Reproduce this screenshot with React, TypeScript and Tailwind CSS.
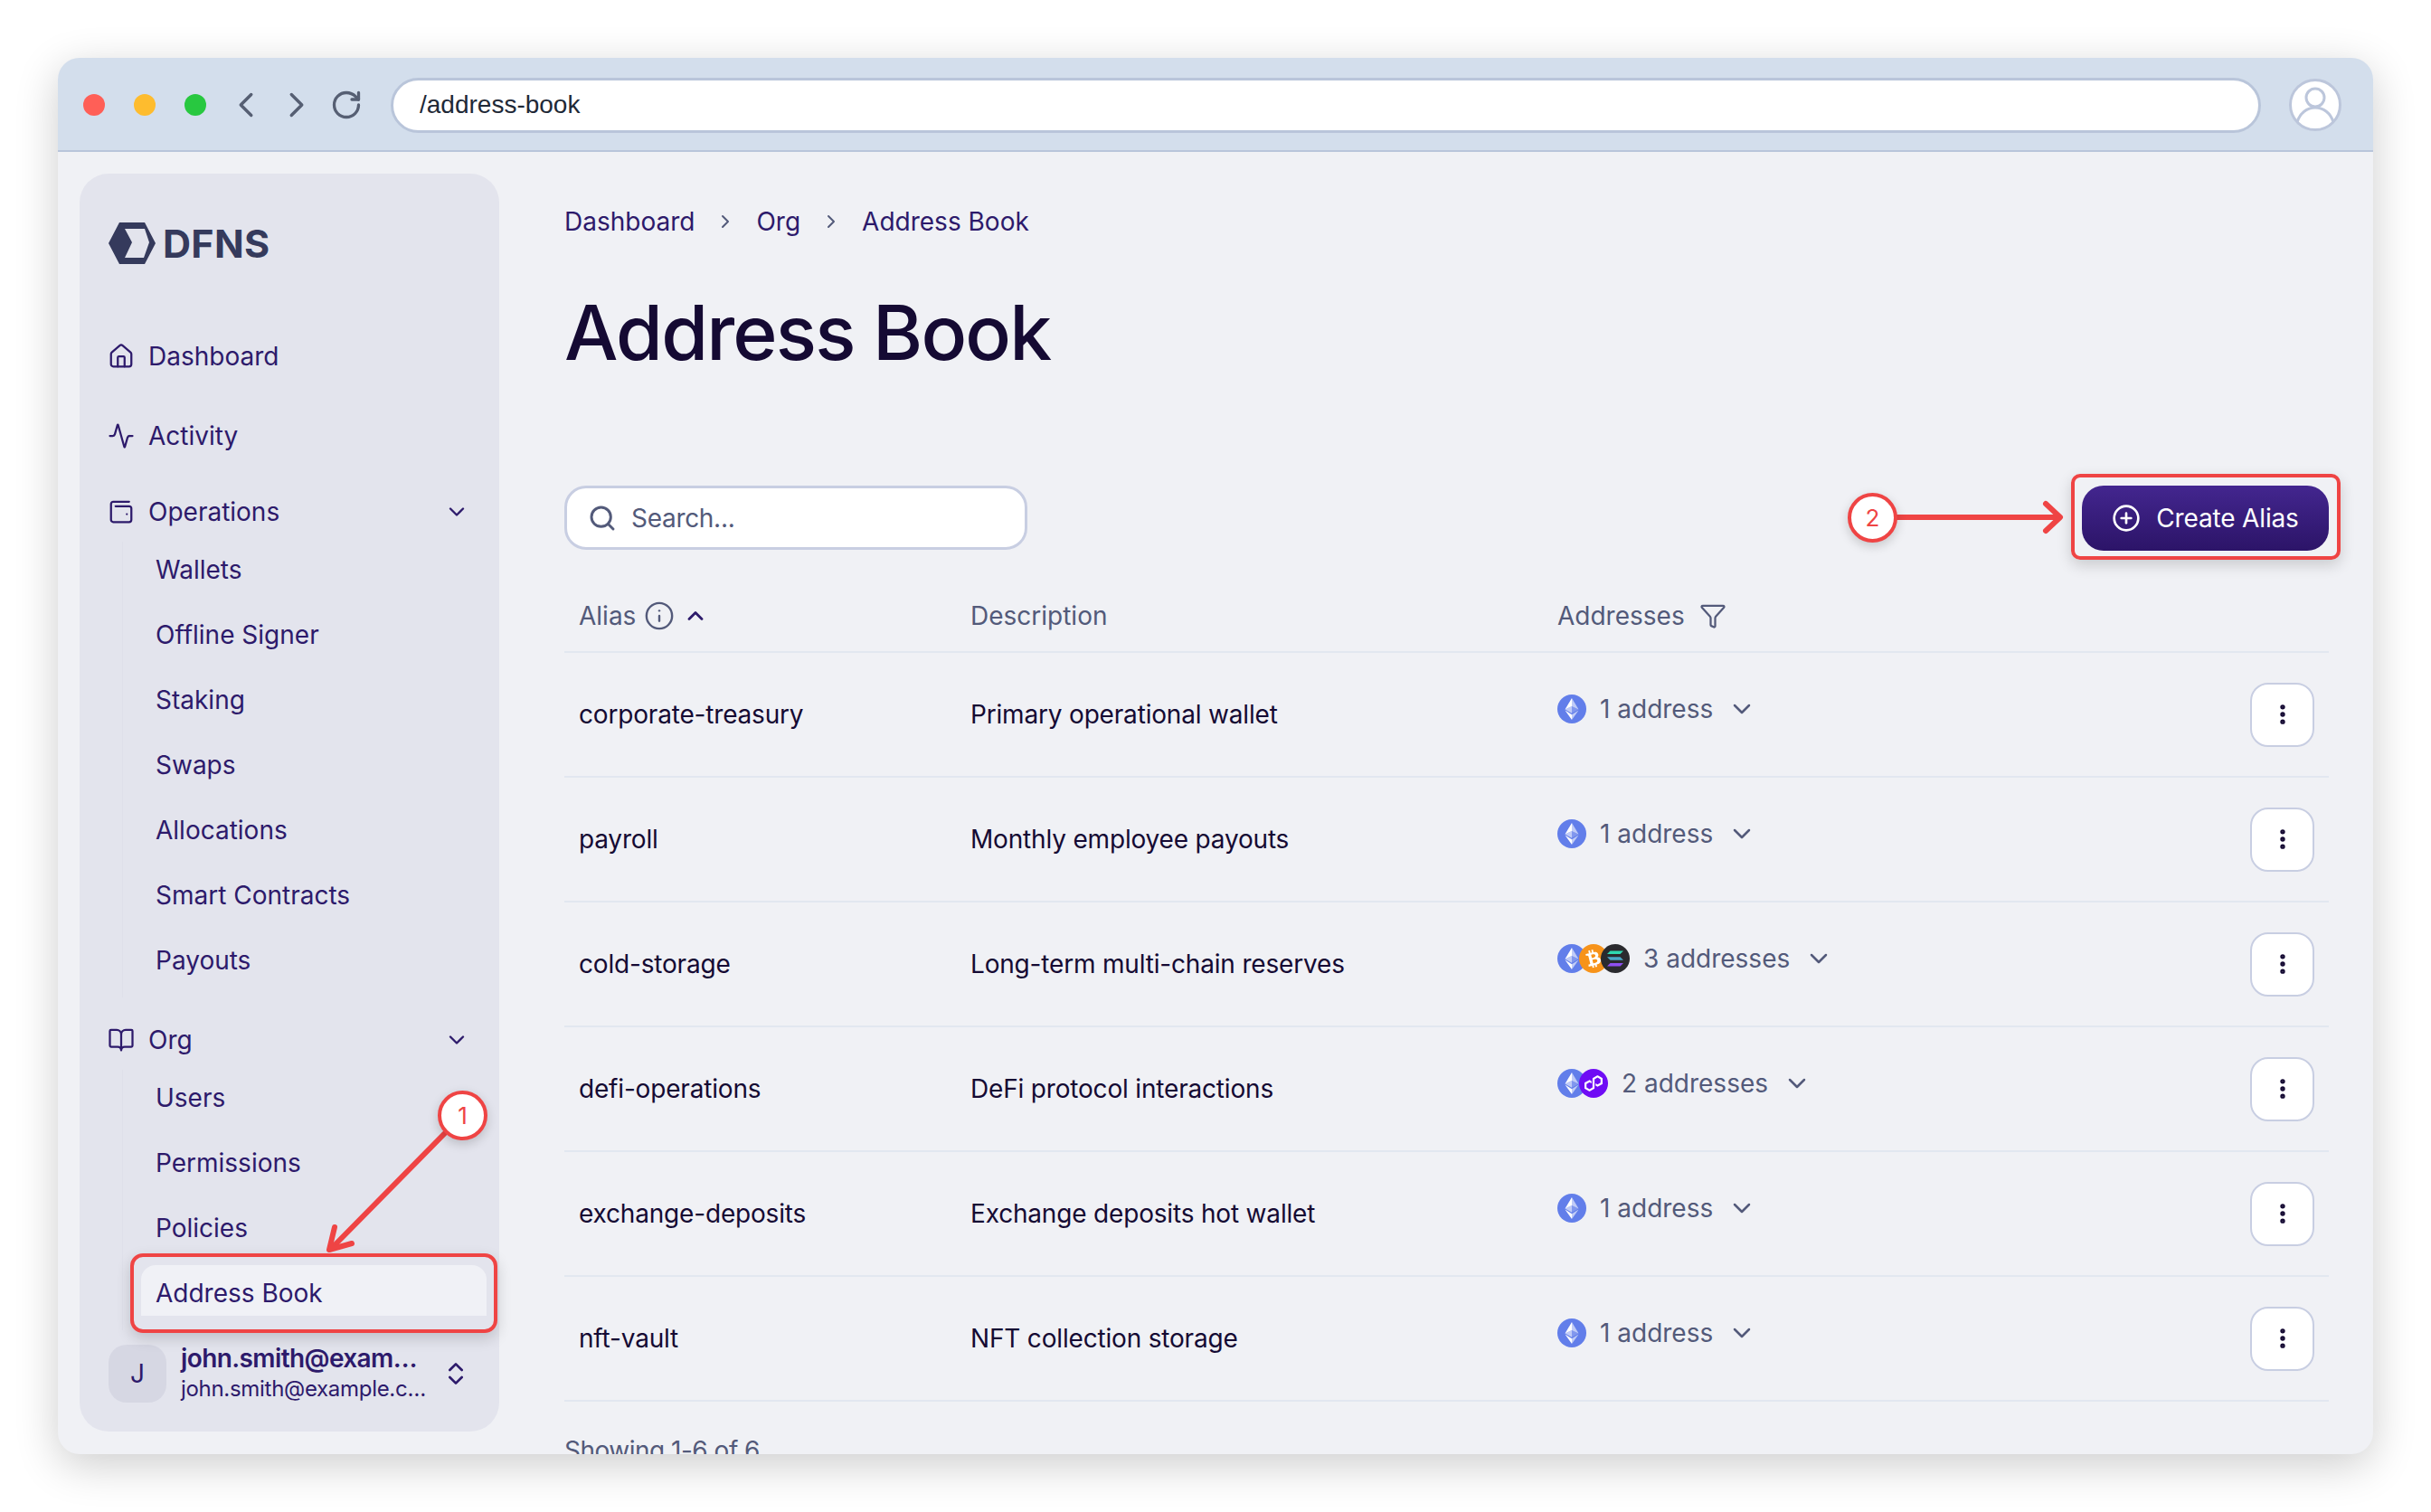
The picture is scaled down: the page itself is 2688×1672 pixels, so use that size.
import { useState } from "react";
import {
  Activity,
  BookOpen,
  ChevronDown,
  ChevronLeft,
  ChevronRight,
  ChevronUp,
  ChevronsUpDown,
  CirclePlus,
  EllipsisVertical,
  Funnel,
  House,
  Info,
  RotateCw,
  Search,
  WalletMinimal,
} from "lucide-react";
import { FaBtc } from "react-icons/fa";
import { SiPolygon } from "react-icons/si";

type Chain = "eth" | "btc" | "sol" | "poly";

const rows: { alias: string; description: string; chains: Chain[]; label: string }[] = [
  { alias: "corporate-treasury", description: "Primary operational wallet", chains: ["eth"], label: "1 address" },
  { alias: "payroll", description: "Monthly employee payouts", chains: ["eth"], label: "1 address" },
  { alias: "cold-storage", description: "Long-term multi-chain reserves", chains: ["eth", "btc", "sol"], label: "3 addresses" },
  { alias: "defi-operations", description: "DeFi protocol interactions", chains: ["eth", "poly"], label: "2 addresses" },
  { alias: "exchange-deposits", description: "Exchange deposits hot wallet", chains: ["eth"], label: "1 address" },
  { alias: "nft-vault", description: "NFT collection storage", chains: ["eth"], label: "1 address" },
];

function ChainIcon({ chain }: { chain: Chain }) {
  if (chain === "btc") {
    return (
      <span className="flex h-8 w-8 items-center justify-center rounded-full bg-[#f7931a] text-white">
        <FaBtc className="h-[20px] w-[20px] -rotate-[14deg]" />
      </span>
    );
  }
  if (chain === "poly") {
    return (
      <span className="flex h-8 w-8 items-center justify-center rounded-full bg-[#6f0cf5] text-white">
        <SiPolygon className="h-[20px] w-[20px]" />
      </span>
    );
  }
  if (chain === "sol") {
    return (
      <svg viewBox="0 0 32 32" className="h-8 w-8">
        <circle cx="16" cy="16" r="16" fill="#2a2a2e" />
        <path d="M10.5 7.5H25l-3.5 3.6H7z" fill="#2fd8b0" />
        <path d="M7 14.2h14.5l3.5 3.6H10.500z" fill="#4aa8c8" />
        <path d="M10.500 21H25l-3.500 3.600H7z" fill="#8d4ff0" />
      </svg>
    );
  }
  return (
    <svg viewBox="0 0 32 32" className="h-8 w-8">
      <circle cx="16" cy="16" r="16" fill="#627eea" />
      <path d="M16 4v9l7.500 3.400z" fill="#ffffff" fillOpacity="0.6" />
      <path d="M16 4L8.500 16.400 16 13z" fill="#ffffff" />
      <path d="M16 22.200V28l7.500-10.400z" fill="#ffffff" fillOpacity="0.6" />
      <path d="M16 28v-5.800L8.500 17.600z" fill="#ffffff" />
      <path d="M16 20.800l7.500-4.400L16 13z" fill="#ffffff" fillOpacity="0.2" />
      <path d="M8.500 16.400l7.500 4.400V13z" fill="#ffffff" fillOpacity="0.6" />
    </svg>
  );
}

function NavTop({ icon, label, chevron, className }: { icon: React.ReactNode; label: string; chevron?: boolean; className: string }) {
  return (
    <div className={`flex h-[48px] items-center pr-[19px] text-[#2d1a6b] ${className}`}>
      <span className="flex w-[44px] shrink-0">{icon}</span>
      <span className="flex-1">{label}</span>
      {chevron && <ChevronDown className="h-[28px] w-[28px]" strokeWidth={2} />}
    </div>
  );
}

function SubNav({ items, active }: { items: string[]; active?: string }) {
  return (
    <div className="ml-[15px] flex flex-col border-l border-[#dfe0ea] pl-[20px]">
      {items.map((item) => (
        <div
          key={item}
          className={`mb-[16px] h-[56px] rounded-t-[16px] pl-[16px] pt-[6px] leading-[50px] text-[#2d1a6b] ${
            item === active ? "bg-[#f0f1f6]" : ""
          }`}
        >
          {item}
        </div>
      ))}
    </div>
  );
}

function Sidebar() {
  const iconClass = "h-[30px] w-[30px] -ml-[1px]";
  return (
    <aside className="h-[1391px] w-[464px] shrink-0 rounded-[32px] bg-[#e3e4ed] pl-[32px] pr-[14px] pt-[54px] text-[28px]">
      <div className="flex h-[46px] items-center gap-[8px] text-[#353a5c]">
        <svg viewBox="0 0 52 46" className="h-[46px] w-[52px]">
          <path
            fillRule="evenodd"
            d="M12 0h28l12 23-12 23H12L0 23zM18 7l8 15-8 17h21l6-17-5-15z"
            fill="#353a5c"
          />
        </svg>
        <span className="text-[43px] font-bold leading-none tracking-[0.3px]">DFNS</span>
      </div>
      <NavTop className="mt-[78px]" icon={<House className={iconClass} strokeWidth={1.8} />} label="Dashboard" />
      <NavTop className="mt-[40px]" icon={<Activity className={iconClass} strokeWidth={1.8} />} label="Activity" />
      <NavTop className="mt-[36px]" icon={<WalletMinimal className={iconClass} strokeWidth={1.8} />} label="Operations" chevron />
      <div className="mt-[9px]">
        <SubNav items={["Wallets", "Offline Signer", "Staking", "Swaps", "Allocations", "Smart Contracts", "Payouts"]} />
      </div>
      <NavTop className="mt-[23px]" icon={<BookOpen className={iconClass} strokeWidth={1.8} />} label="Org" chevron />
      <div className="mt-[9px]">
        <SubNav items={["Users", "Permissions", "Policies", "Address Book"]} active="Address Book" />
      </div>
      <div className="mt-[16px] flex h-[64px] items-center text-[#2d1a6b]">
        <div className="flex h-[64px] w-[64px] shrink-0 items-center justify-center rounded-[20px] bg-[#d6d7e3] text-[28px]">
          J
        </div>
        <div className="ml-[16px] flex w-[276px] flex-col whitespace-nowrap">
          <span className="text-[28px] font-semibold leading-[34px] tracking-[-0.6px]">john.smith@exam…</span>
          <span className="text-[24px] leading-[34px] tracking-[-0.3px]">john.smith@example.c…</span>
        </div>
        <ChevronsUpDown className="ml-[12px] h-[32px] w-[32px]" strokeWidth={2} />
      </div>
    </aside>
  );
}

function AliasRow({ alias, description, chains, label }: (typeof rows)[number]) {
  return (
    <div className="flex h-[138px] items-center border-b-[2px] border-[#e2e7f0] pl-[16px] pr-[16px] text-[#150a33]">
      <div className="w-[433px] shrink-0 tracking-[-0.18px]">{alias}</div>
      <div className="w-[649px] shrink-0 tracking-[-0.18px]">{description}</div>
      <div className="flex flex-1 items-center pb-[12px] text-[#535a7a]">
        <div className="flex">
          {chains.map((c, i) => (
            <span key={c} className={i > 0 ? "-ml-[8px]" : ""}>
              <ChainIcon chain={c} />
            </span>
          ))}
        </div>
        <span className="ml-[15px]">{label}</span>
        <ChevronDown className="ml-[16px] h-[32px] w-[32px]" strokeWidth={1.9} />
      </div>
      <button className="flex h-[71px] w-[71px] items-center justify-center rounded-[20px] border-[2px] border-[#c8cee2] bg-white text-[#150a33]">
        <EllipsisVertical className="h-[28px] w-[28px]" strokeWidth={2.6} />
      </button>
    </div>
  );
}

function Annotations() {
  return (
    <>
      {/* red boxes */}
      <div className="absolute left-[80px] top-[1322px] h-[88px] w-[406px] rounded-[14px] border-[4px] border-[#ef4444] shadow-[0_6px_16px_rgba(0,0,0,0.16)]" />
      <div className="absolute left-[2226px] top-[460px] h-[95px] w-[298px] rounded-[10px] border-[4px] border-[#ef4444] shadow-[0_6px_16px_rgba(0,0,0,0.16)]" />
      {/* arrows */}
      <svg className="absolute left-0 top-0 h-[1544px] w-[2560px]" viewBox="0 0 2560 1544" fill="none">
        <path d="M428 1189L302 1317" stroke="#ef4444" strokeWidth="6" strokeLinecap="round" />
        <path d="M306 1293L300 1318L325 1311" stroke="#ef4444" strokeWidth="6" strokeLinecap="round" strokeLinejoin="round" />
        <path d="M2033 508H2212" stroke="#ef4444" strokeWidth="6" strokeLinecap="round" />
        <path d="M2198 493L2214 508L2198 523" stroke="#ef4444" strokeWidth="6" strokeLinecap="round" strokeLinejoin="round" />
      </svg>
      {/* numbered badges */}
      <div className="absolute left-[420px] top-[1142px] flex h-[55px] w-[55px] items-center justify-center rounded-full border-[4px] border-[#ef4444] bg-white text-[26px] text-[#ef4444] shadow-[0_4px_12px_rgba(0,0,0,0.18)]">
        1
      </div>
      <div className="absolute left-[1979px] top-[481px] flex h-[55px] w-[55px] items-center justify-center rounded-full border-[4px] border-[#ef4444] bg-white text-[26px] text-[#ef4444] shadow-[0_4px_12px_rgba(0,0,0,0.18)]">
        2
      </div>
    </>
  );
}

export default function App() {
  const [query, setQuery] = useState("");

  return (
    <div className="h-[1672px] w-[2688px] overflow-hidden bg-white pl-[64px] pt-[64px] font-['Inter',sans-serif]">
      <div className="relative h-[1544px] w-[2560px] overflow-hidden rounded-[24px] bg-[#f0f1f5] shadow-[0_12px_48px_rgba(0,0,0,0.2)]">
        <div className="flex h-[104px] items-center border-b-[2px] border-[#b9c5da] bg-[#d3deec] pl-[28px] pt-[2px] text-[#565f73]">
          <span className="h-[24px] w-[24px] rounded-full bg-[#ff5f57]" />
          <span className="ml-[32px] h-[24px] w-[24px] rounded-full bg-[#febc2e]" />
          <span className="ml-[32px] h-[24px] w-[24px] rounded-full bg-[#28c840]" />
          <ChevronLeft className="ml-[21px] h-[46px] w-[46px]" strokeWidth={1.8} />
          <ChevronRight className="ml-[10px] h-[46px] w-[46px]" strokeWidth={1.8} />
          <RotateCw className="ml-[14px] h-[36px] w-[36px]" strokeWidth={2.2} />
          <div className="ml-[31px] flex h-[61px] w-[2068px] items-center rounded-full border-[3px] border-[#b9c5da] bg-white pl-[29px] font-['Liberation_Sans',sans-serif] text-[28px] text-[#1f2937]">
            /address-book
          </div>
          <svg viewBox="0 0 58 58" className="ml-[31px] h-[58px] w-[58px]" fill="none">
            <circle cx="29" cy="29" r="27.500" fill="#ffffff" stroke="#bcc6db" strokeWidth="3" />
            <circle cx="29" cy="21" r="10" stroke="#bcc6db" strokeWidth="3" />
            <path d="M9 48c3-10 11-16 20-16s17 6 20 16" stroke="#bcc6db" strokeWidth="3" />
          </svg>
        </div>

        <div className="flex pl-[24px] pt-[24px] text-[28px]">
          <Sidebar />
          <main className="ml-[72px] w-[1951px] shrink-0">
            <nav className="mt-[35px] flex h-[36px] items-center text-[#2d1a6b]">
              <span>Dashboard</span>
              <ChevronRight className="mx-[22px] h-[24px] w-[24px] text-[#535a7a]" strokeWidth={2} />
              <span>Org</span>
              <ChevronRight className="mx-[22px] h-[24px] w-[24px] text-[#535a7a]" strokeWidth={2} />
              <span>Address Book</span>
            </nav>
            <h1 className="mt-[55px] text-[84px] font-medium leading-[100px] tracking-[-0.022em] text-[#150a33]">
              Address Book
            </h1>

            <div className="mt-[119px] flex h-[72px] items-center justify-between">
              <label className="flex h-[71px] w-[512px] items-center self-start rounded-[24px] border-[3px] border-[#c8cee2] bg-white pl-[23px] text-[#535a7a]">
                <Search className="h-[32px] w-[32px]" strokeWidth={2.2} />
                <input
                  value={query}
                  onChange={(e) => setQuery(e.target.value)}
                  placeholder="Search..."
                  className="ml-[16px] flex-1 bg-transparent tracking-[-0.3px] outline-none placeholder:text-[#535a7a]"
                />
              </label>
              <button className="flex h-[72px] w-[273px] items-center justify-center gap-[17px] rounded-[24px] bg-gradient-to-b from-[#43268f] to-[#2c1468] text-white">
                <CirclePlus className="h-[32px] w-[32px]" strokeWidth={2} />
                <span className="tracking-[-0.15px]">Create Alias</span>
              </button>
            </div>

            <div className="mt-[32px] flex h-[81px] items-center border-b-[2px] border-[#e2e7f0] pl-[16px] text-[#535a7a]">
              <div className="flex w-[433px] shrink-0 items-center">
                Alias
                <Info className="ml-[9px] h-[34px] w-[34px]" strokeWidth={1.7} />
                <ChevronUp className="ml-[9px] h-[28px] w-[28px] text-[#2d1a6b]" strokeWidth={2.4} />
              </div>
              <div className="w-[649px] shrink-0">Description</div>
              <div className="flex items-center">
                Addresses
                <Funnel className="ml-[16px] h-[30px] w-[30px]" strokeWidth={1.8} />
              </div>
            </div>

            {rows.map((r) => (
              <AliasRow key={r.alias} {...r} />
            ))}

            <p className="mt-[33px] tracking-[-0.5px] text-[#535a7a]">Showing 1-6 of 6</p>
          </main>
        </div>

        <Annotations />
      </div>
    </div>
  );
}
